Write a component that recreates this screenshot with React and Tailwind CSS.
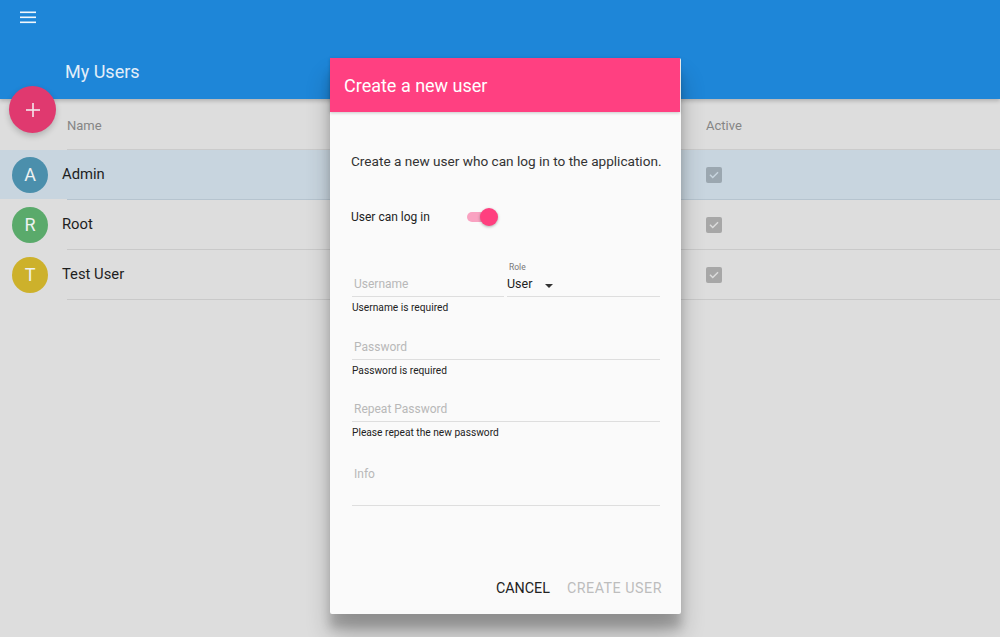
import React from "react";

const users = [
  { name: "Admin", letter: "A", color: "bg-[#4b8fac]", selected: true },
  { name: "Root", letter: "R", color: "bg-[#5aaa6b]" },
  { name: "Test User", letter: "T", color: "bg-[#cdb12b]" },
];

function Check({ selected }) {
  return (
    <div className={`w-[16px] h-[16px] rounded-[2px] flex items-center justify-center ${selected ? "bg-[#9ba7b0]" : "bg-[#a7a7a7]"}`}>
      <svg width="12" height="12" viewBox="0 0 24 24" fill="none" stroke={selected ? "#c8d5df" : "#dcdcdc"} strokeWidth="3" strokeLinecap="square">
        <path d="M5 12.5l4.5 4.5L19 7.5" />
      </svg>
    </div>
  );
}

function Field({ label, helper, className = "", h = "h-[26px]" }) {
  return (
    <div className={className}>
      <div className={`${h} flex items-end pb-[3px] pl-[2px] text-[12px] text-[#b8b8b8]`}>{label}</div>
      <div className="h-px bg-[#dedede]" />
      {helper && <div className="mt-[4px] text-[10.2px] text-[#222] leading-[13px]">{helper}</div>}
    </div>
  );
}

export default function App() {
  return (
    <div className="relative w-[1000px] h-[637px] overflow-hidden bg-[#dddddd]" style={{ fontFamily: "Roboto, 'Liberation Sans', sans-serif" }}>
      {/* App bar */}
      <div className="h-[99px] bg-[#1e86d8] flex flex-col shadow-[0_2px_4px_rgba(0,0,0,0.2)] relative z-[1]">
        <div className="pl-[20px] pt-[11px]">
          <svg width="16" height="13" viewBox="0 0 16 13">
            <rect x="0" y="0.5" width="16" height="1.6" fill="#f2f7fc" />
            <rect x="0" y="5.5" width="16" height="1.6" fill="#f2f7fc" />
            <rect x="0" y="10.5" width="16" height="1.6" fill="#f2f7fc" />
          </svg>
        </div>
        <div className="pl-[65px] mt-[37px] text-[18px] text-[#e3eef9] leading-[22px]">My Users</div>
      </div>

      {/* Table */}
      <div className="flex h-[50px] items-center pt-[3px] text-[13px] text-[#858585]">
        <div className="w-[706px] pl-[67px]">Name</div>
        <div>Active</div>
      </div>
      <div className="ml-[67px] h-px bg-[#cbcbcb]" />
      {users.map((u) => (
        <div key={u.name}>
          <div className={`flex h-[49px] items-center ${u.selected ? "bg-[#c8d5df]" : ""}`}>
            <div className="w-[706px] flex items-center pl-[12px]">
              <div className={`w-[36px] h-[36px] rounded-full ${u.color} flex items-center justify-center text-[18px] text-[#eef2f2]`}>{u.letter}</div>
              <div className="ml-[14px] text-[14.8px] text-[#1e1e1e]">{u.name}</div>
            </div>
            <Check selected={u.selected} />
          </div>
          <div className={`ml-[67px] h-px ${u.selected ? "bg-[#b6c4cf]" : "bg-[#c9c9c9]"}`} />
        </div>
      ))}

      {/* FAB */}
      <div className="absolute left-[9px] top-[86px] w-[47px] h-[47px] rounded-full bg-[#e0396f] z-[2] flex items-center justify-center shadow-[0_3px_6px_rgba(0,0,0,0.2)]">
        <svg width="14" height="14" viewBox="0 0 14 14">
          <rect x="6.2" y="0" width="1.6" height="14" fill="#f4e6ec" />
          <rect x="0" y="6.2" width="14" height="1.6" fill="#f4e6ec" />
        </svg>
      </div>

      {/* Dialog */}
      <div className="absolute left-[330px] top-[58px] w-[351px] h-[556px] bg-[#fafafa] rounded-[2px] z-[3] flex flex-col shadow-[0_20px_24px_rgba(0,0,0,0.24),0_14px_10px_rgba(0,0,0,0.16)]">
        <div className="h-[54px] w-[350px] bg-[#ff4081] flex items-center pl-[14px] text-[18px] text-white shadow-[0_1px_3px_rgba(0,0,0,0.2)]">
          Create a new user
        </div>
        <div className="px-[21px] flex flex-col">
          <div className="mt-[40px] text-[13.6px] text-[#333] leading-[18px] whitespace-nowrap">Create a new user who can log in to the application.</div>
          <div className="mt-[37px] flex items-center h-[20px]">
            <div className="w-[116px] text-[12px] text-[#222]">User can log in</div>
            <div className="relative w-[28px] h-[20px] flex items-center">
              <div className="w-[22px] h-[10px] rounded-full bg-[#f9a2c1]" />
              <div className="absolute left-[13px] top-[1px] w-[18px] h-[18px] rounded-full bg-[#ff3f7f] shadow-[0_1px_3px_rgba(0,0,0,0.3)]" />
            </div>
          </div>
          <div className="mt-[24px] flex pl-[1px]">
            <Field label="Username" helper="Username is required" className="w-[152px]" h="h-[45px]" />
            <div className="ml-[3px] flex-1">
              <div className="h-[45px] relative">
                <div className="absolute left-[2px] top-[11px] text-[8.5px] leading-[10px] text-[#777]">Role</div>
                <div className="absolute left-0 bottom-[4px] flex items-center text-[12.5px] leading-[16px] text-[#222]">
                  User
                  <svg className="ml-[13px] mt-[3px]" width="8" height="4" viewBox="0 0 8 4"><path d="M0 0h8L4 4z" fill="#333" /></svg>
                </div>
              </div>
              <div className="h-px bg-[#dedede]" />
            </div>
          </div>
          <Field label="Password" helper="Password is required" className="mt-[19px] pl-[1px]" />
          <Field label="Repeat Password" helper="Please repeat the new password" className="mt-[18px] pl-[1px]" />
          <div className="mt-[20px] pl-[1px]">
            <div className="h-[46px] pl-[2px] pt-[6px] text-[12px] text-[#b8b8b8]">Info</div>
            <div className="h-px bg-[#dedede]" />
          </div>
        </div>
        <div className="mt-auto mb-[16px] flex justify-end pr-[19px] gap-[17px] text-[14.3px] leading-[20px]">
          <span className="text-[#222]">CANCEL</span>
          <span className="text-[#bdbdbd] tracking-[0.5px]">CREATE USER</span>
        </div>
      </div>
    </div>
  );
}
